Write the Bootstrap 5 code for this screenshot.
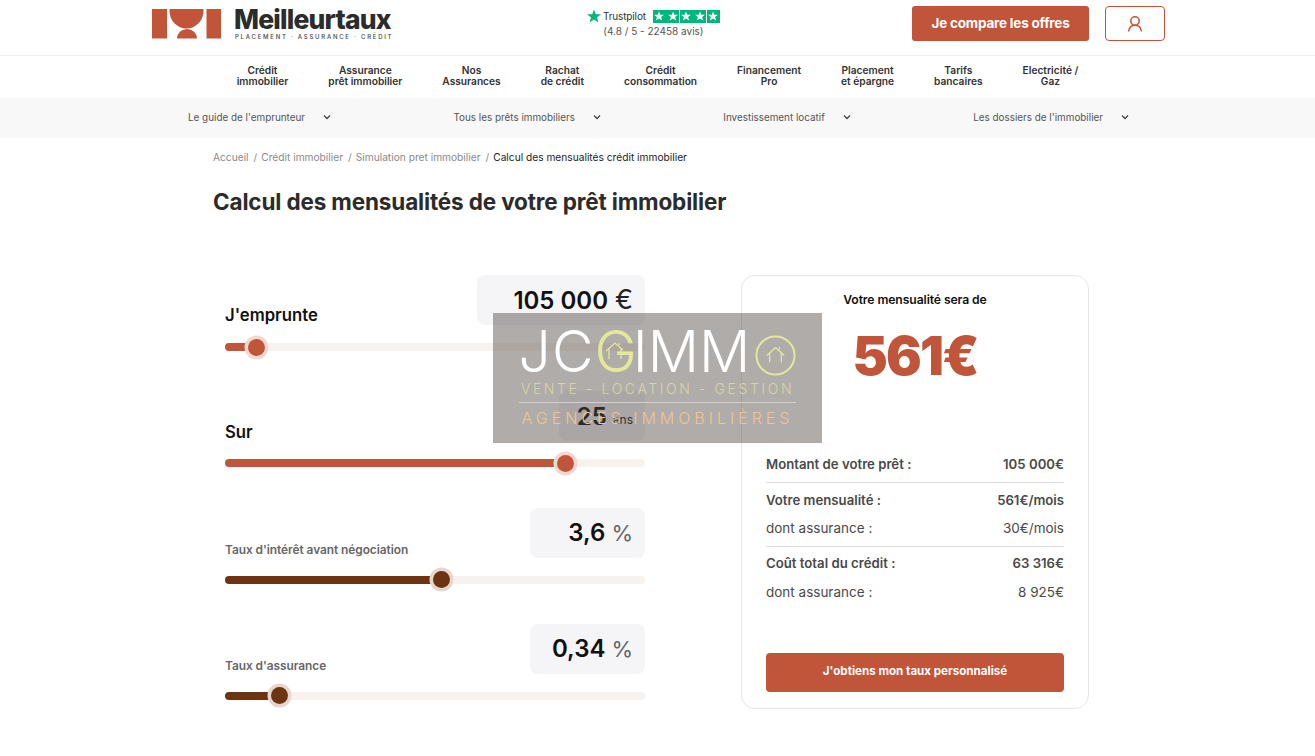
<!DOCTYPE html>
<html lang="fr">
<head>
  <meta charset="UTF-8">
  <meta name="viewport" content="width=device-width, initial-scale=1.0">
  <title>Calcul des mensualités</title>
  <link href="https://cdn.jsdelivr.net/npm/bootstrap@5.3.0/dist/css/bootstrap.min.css" rel="stylesheet">
  <style>
    body { font-family: Inter, "Liberation Sans", sans-serif; color: #2b2b2b; background: #fff; height: 756px; overflow: hidden; position: relative; }
    a { text-decoration: none; color: inherit; }

    /* header */
    .top-bar { height: 56px; border-bottom: 1px solid #eee; padding: 6px 150px 0 152px; }
    .brand-link { width: 240px; }
    .brand-logo { margin: 3px 12px 0 0; flex: none; }
    .brand-name { font-size: 26.5px; font-weight: 800; line-height: 26px; letter-spacing: -.8px; color: #2c2c2c; white-space: nowrap; }
    .brand-sub { font-size: 6px; font-weight: 500; letter-spacing: 1.75px; color: #444; line-height: 8px; margin: 1px 0 0 1px; white-space: nowrap; }
    .tp-block { margin-left: 195px; margin-top: 3px; font-size: 10px; color: #555; line-height: 14px; }
    .tp-name { font-size: 10px; color: #333; letter-spacing: -.15px; margin: 0 7px 0 2px; }
    .tp-stars { gap: .5px; }
    .tp-star { width: 13px; height: 13px; background: #00b67a; display: flex; align-items: center; justify-content: center; }
    .tp-score { margin-top: 1px; }
    .cta-main { background: #c1553a; border: 0; color: #fff; font-size: 13.5px; font-weight: 700; width: 177px; height: 35px; border-radius: 3px; padding: 0; letter-spacing: -.2px; }
    .cta-user { width: 60px; height: 35px; border: 1px solid #c1553a; border-radius: 4px; background: #fff; padding: 0; margin-left: 16px; }

    /* menus */
    .main-menu { height: 42px; padding-bottom: 2px; gap: 40px; font-size: 10.2px; font-weight: 600; line-height: 11px; color: #333; text-align: center; }
    .sub-menu { height: 40px; background: #f8f8f8; padding: 0 186px 1px 188px; font-size: 9.9px; color: #555; }
    .sub-menu svg { margin-left: 18px; }

    /* content */
    .page-body { padding-left: 213px; }
    .crumbs { font-size: 10.2px; color: #8a8a8a; padding-top: 13px; height: 39px; line-height: 12px; }
    .crumbs i { font-style: normal; margin: 0 4px 0 5px; }
    .crumbs b { font-weight: 400; color: #222; }
    .page-title { font-size: 22.5px; font-weight: 700; color: #2b2b2b; line-height: 28px; margin: 11px 0 59px; letter-spacing: -.15px; }
    .sliders { width: 420px; margin-left: 12px; }
    .calc-row { height: 116.3px; }
    .val-box { height: 50px; background: #f5f5f8; border-radius: 8px; font-weight: 600; font-size: 24px; color: #111; padding: 1px 12px 0 0; }
    .val-box span { font-size: 27px; font-weight: 400; margin-left: 7px; color: #222; }
    .val-box span.val-pct { color: #666; font-size: 22px; margin-left: 6px; }
    .val-box span.val-ans { font-size: 12px; color: #222; margin-left: 6px; margin-bottom: -6px; }
    .lbl-big { font-size: 16.7px; font-weight: 600; color: #111; margin-bottom: -3.500px; }
    .lbl-small { font-size: 11.9px; font-weight: 600; color: #666; margin-bottom: -1px; letter-spacing: -.05px; }
    .track { height: 8px; margin-top: 18px; background: #f8f2ee; border-radius: 4px; position: relative; }
    .track-fill { height: 100%; border-radius: 4px; background: #c1553a; position: relative; }
    .track-fill::after { content: ""; position: absolute; right: -9px; top: -4.5px; width: 17px; height: 17px; border-radius: 50%; background: #c1553a; box-shadow: 0 0 0 3.500px #f1d9d1; }
    .track-brown .track-fill, .track-brown .track-fill::after { background: #6e3311; }
    .track-brown .track-fill::after { box-shadow: 0 0 0 3.500px #e5d7ce; }

    /* result card */
    .result-card { width: 348px; height: 434px; margin-left: 96px; border: 1px solid #e6e6e6; border-radius: 14px; padding: 0 24px; }
    .result-head { font-size: 12.2px; font-weight: 600; color: #111; text-align: center; margin-top: 17px; line-height: 14px; letter-spacing: -.1px; }
    .result-big { font-size: 53px; font-weight: 900; color: #c1553a; text-align: center; line-height: 60px; margin-top: 19px; height: 60px; letter-spacing: -1.8px; }
    .res-list { margin-top: 65px; font-size: 13.5px; color: #4a4a4a; }
    .res-line { height: 27.5px; align-items: center; }
    .res-strong { font-weight: 600; font-size: 13.2px; }
    .res-rule { border-top: 1px solid #ddd; margin: 3.750px 0; }
    .res-btn { background: #c1553a; color: #fff; border: 0; width: 100%; height: 39px; border-radius: 4px; font-size: 11.6px; font-weight: 700; margin-top: 47px; padding: 0; }

    /* agency watermark lying over the page */
    .stamp { position: absolute; left: 493px; top: 313px; width: 329px; height: 130px; background: rgba(80, 72, 65, .45); color: #fff; text-align: center; }
    .stamp-logo { font-weight: 300; font-size: 57px; line-height: 52px; height: 52px; margin-top: 13px; white-space: nowrap; }
    .stamp-logo span { letter-spacing: 1px; }
    .stamp-logo em { font-style: normal; color: #e3e89a; }
    .stamp-house { width: 20px; height: 18px; margin: 0 8px 0 -32px; position: relative; top: -9px; vertical-align: 3px; }
    .stamp-ring { width: 41px; height: 41px; margin-left: 5px; vertical-align: -4px; }
    .stamp-a { font-size: 14px; font-weight: 300; letter-spacing: 2.6px; color: #d8d5a8; line-height: 16px; margin: 3px 0 0 0; white-space: nowrap; }
    .stamp-b { font-size: 16px; font-weight: 300; letter-spacing: 4px; color: #efc78d; line-height: 18px; border-top: 1px solid #d5d2cd; margin: 5px 26px 0; padding-top: 6px; white-space: nowrap; }
  </style>
</head>

<body>
  <header class="top-bar d-flex align-items-start">
    <a href="#" class="brand-link d-flex">
      <svg class="brand-logo" width="70" height="30" viewBox="0 0 70 30" aria-hidden="true">
        <rect x="0" y="0" width="15" height="29.500" fill="#c1553a"/>
        <rect x="54.500" y="0" width="14.500" height="29.500" fill="#c1553a"/>
        <path d="M17.500 0h34v2a17 17.500 0 0 1-34 0z" fill="#c1553a"/>
        <path d="M25 29.500a10 9.500 0 0 1 20 0z" fill="#c1553a"/>
      </svg>
      <span>
        <span class="brand-name d-block">Meilleurtaux</span>
        <span class="brand-sub d-block">PLACEMENT · ASSURANCE · CRÉDIT</span>
      </span>
    </a>
    <div class="tp-block text-center">
      <div class="d-flex align-items-center">
        <svg width="14" height="14" viewBox="0 0 24 24"><path d="M12 1l3 8h9l-7 5.500 2.700 8.500L12 17.800 4.300 23 7 14.500 0 9h9z" fill="#00b67a"/></svg>
        <span class="tp-name">Trustpilot</span>
        <span class="tp-stars d-flex" id="tpStars"></span>
      </div>
      <div class="tp-score">(4.8 / 5 - 22458 avis)</div>
    </div>
    <button class="cta-main ms-auto">Je compare les offres</button>
    <button class="cta-user d-flex align-items-center justify-content-center" aria-label="Compte">
      <svg width="18" height="18" viewBox="0 0 18 18" fill="none" stroke="#c1553a" stroke-width="1.500"><circle cx="9" cy="6" r="4.200"/><path d="M2.500 16.500C3 12.500 5.500 10.200 9 10.200s6 2.300 6.500 6.300"/></svg>
    </button>
  </header>

  <nav class="main-menu d-flex justify-content-center align-items-center">
    <a href="#">Crédit<br>immobilier</a>
    <a href="#">Assurance<br>prêt immobilier</a>
    <a href="#">Nos<br>Assurances</a>
    <a href="#">Rachat<br>de crédit</a>
    <a href="#">Crédit<br>consommation</a>
    <a href="#">Financement<br>Pro</a>
    <a href="#">Placement<br>et épargne</a>
    <a href="#">Tarifs<br>bancaires</a>
    <a href="#">Electricité /<br>Gaz</a>
  </nav>

  <div class="sub-menu d-flex justify-content-between align-items-center" id="subMenu"></div>

  <main class="page-body">
    <div class="crumbs">Accueil<i>/</i>Crédit immobilier<i>/</i>Simulation pret immobilier<i>/</i><b>Calcul des mensualités crédit immobilier</b></div>
    <h1 class="page-title">Calcul des mensualités de votre prêt immobilier</h1>

    <div class="d-flex align-items-start">
      <div class="sliders" id="sliders"></div>

      <aside class="result-card">
        <div class="result-head">Votre mensualité sera de</div>
        <div class="result-big">561€</div>
        <div class="res-list">
          <div class="res-line d-flex justify-content-between res-strong"><span>Montant de votre prêt :</span><span>105 000€</span></div>
          <div class="res-rule"></div>
          <div class="res-line d-flex justify-content-between res-strong"><span>Votre mensualité :</span><span>561€/mois</span></div>
          <div class="res-line d-flex justify-content-between"><span>dont assurance :</span><span>30€/mois</span></div>
          <div class="res-rule"></div>
          <div class="res-line d-flex justify-content-between res-strong"><span>Coût total du crédit :</span><span>63 316€</span></div>
          <div class="res-line d-flex justify-content-between"><span>dont assurance :</span><span>8 925€</span></div>
        </div>
        <button class="res-btn">J'obtiens mon taux personnalisé</button>
      </aside>
    </div>
  </main>

  <div class="stamp">
    <div class="stamp-logo"><span>JC</span><em>G</em><svg class="stamp-house" viewBox="0 0 20 18" fill="none" stroke="#e3e89a" stroke-width="1.300"><path d="M1 9l9-8 8 7M4 7v10M16 7v10M14 3V1"/></svg>IMM<svg class="stamp-ring" viewBox="0 0 42 42" fill="none" stroke="#e3e89a"><circle cx="21" cy="21" r="19.500" stroke-width="2"/><path d="M12 21l9-8 9 8M15 19v9M27 19v9M25 15v-3" stroke-width="1.300"/></svg></div>
    <div class="stamp-a">VENTE - LOCATION - GESTION</div>
    <div class="stamp-b">AGENCES IMMOBILIÈRES</div>
  </div>

  <script>
    // five green trustpilot squares
    document.getElementById('tpStars').innerHTML = Array(5).fill(
      '<span class="tp-star"><svg width="10" height="10" viewBox="0 0 24 24"><path d="M12 1l3 8h9l-7 5.500 2.700 8.500L12 17.800 4.300 23 7 14.500 0 9h9z" fill="#fff"/></svg></span>'
    ).join('');

    const chevron = '<svg width="8" height="6" viewBox="0 0 8 6" fill="none" stroke="#444" stroke-width="1.300"><path d="M1 1.500l3 3 3-3"/></svg>';
    document.getElementById('subMenu').innerHTML = [
      'Le guide de l\'emprunteur', 'Tous les prêts immobiliers', 'Investissement locatif', 'Les dossiers de l\'immobilier'
    ].map(t => `<a href="#" class="d-flex align-items-center">${t}${chevron}</a>`).join('');

    const rows = [
      { label: 'J\'emprunte', big: true, val: '105 000', unit: '€', w: 168, pct: 7.4 },
      { label: 'Sur', big: true, val: '25', unit: 'ans', unitClass: 'val-ans', w: 86, pct: 81 },
      { label: 'Taux d\'intérêt avant négociation', val: '3,6', unit: '%', unitClass: 'val-pct', w: 115, pct: 51.4, brown: true },
      { label: 'Taux d\'assurance', val: '0,34', unit: '%', unitClass: 'val-pct', w: 115, pct: 12.9, brown: true }
    ];
    document.getElementById('sliders').innerHTML = rows.map(r => `
      <div class="calc-row">
        <div class="d-flex justify-content-between align-items-end">
          <span class="${r.big ? 'lbl-big' : 'lbl-small'}">${r.label}</span>
          <div class="val-box d-flex align-items-center justify-content-end" style="width:${r.w}px">${r.val}<span class="${r.unitClass || ''}">${r.unit}</span></div>
        </div>
        <div class="track ${r.brown ? 'track-brown' : ''}"><div class="track-fill" style="width:${r.pct}%"></div></div>
      </div>`).join('');
  </script>
  <script src="https://cdn.jsdelivr.net/npm/bootstrap@5.3.0/dist/js/bootstrap.bundle.min.js"></script>
</body>
</html>
